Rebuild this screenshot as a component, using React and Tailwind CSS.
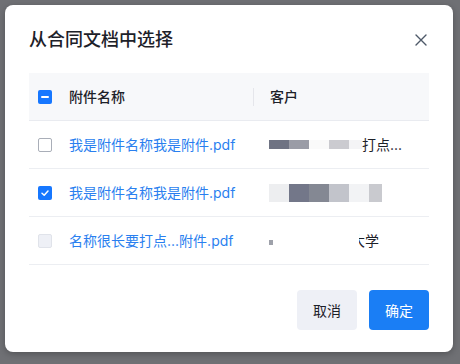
import React from "react";

const rows = [
  { name: "我是附件名称我是附件.pdf", state: "off" },
  { name: "我是附件名称我是附件.pdf", state: "on" },
  { name: "名称很长要打点...附件.pdf", state: "disabled" },
];

function Checkbox({ state }) {
  if (state === "on") {
    return (
      <div className="w-[14px] h-[14px] rounded-[2px] bg-[#1677ff] flex items-center justify-center">
        <svg width="10" height="10" viewBox="0 0 10 10" fill="none">
          <path d="M2 5.2 4.2 7.2 8 3" stroke="#fff" strokeWidth="1.5" strokeLinecap="round" strokeLinejoin="round" />
        </svg>
      </div>
    );
  }
  if (state === "some") {
    return (
      <div className="w-[14px] h-[14px] rounded-[2px] bg-[#1677ff] flex items-center justify-center">
        <div className="w-[8px] h-[2px] bg-white rounded-full" />
      </div>
    );
  }
  if (state === "disabled") {
    return <div className="w-[14px] h-[14px] rounded-[2px] bg-[#eef0f6] border border-[#e0e3ea]" />;
  }
  return <div className="w-[14px] h-[14px] rounded-[2px] bg-white border border-[#a9aeb8]" />;
}

function Customer({ i }) {
  if (i === 0) {
    return (
      <div className="flex items-center">
        <div className="flex">
          <div className="w-[20px] h-[9px] bg-[#6f7383]" />
          <div className="w-[20px] h-[9px] bg-[#9a9ca6]" />
          <div className="w-[20px] h-[9px] bg-[#fafafa]" />
          <div className="w-[20px] h-[9px] bg-[#cbcbd0]" />
          <div className="w-[13px] h-[9px] bg-[#f4f4f6]" />
        </div>
        <span className="text-[14px] text-[#1d2129]">打点...</span>
      </div>
    );
  }
  if (i === 1) {
    return (
      <div className="flex">
        <div className="w-[20px] h-[18px] bg-[#edeef0]" />
        <div className="w-[20px] h-[18px] bg-[#737789]" />
        <div className="w-[20px] h-[18px] bg-[#848893]" />
        <div className="w-[20px] h-[18px] bg-[#c2c4cb]" />
        <div className="w-[20px] h-[18px] bg-[#f2f3f5]" />
        <div className="w-[13px] h-[18px] bg-[#c9cacf]" />
      </div>
    );
  }
  return (
    <div className="flex items-center">
      <div className="w-[4px] h-[5px] bg-[#9ea1aa] mt-[3px]" />
      <span className="relative ml-[78px] text-[14px] text-[#1d2129]">
        大学
        <span className="absolute left-0 top-0 w-[8px] h-full bg-white" />
      </span>
    </div>
  );
}

export default function App() {
  return (
    <div className="w-[460px] h-[364px] bg-[#6f7074] p-[5px] font-['Inter','Noto_Sans_CJK_SC',sans-serif]">
      <div className="w-[448px] h-[347px] bg-white rounded-[8px] shadow-[0_2px_6px_rgba(0,0,0,0.25)] px-6 pt-[22px]">
        <div className="flex items-center justify-between h-[26px]">
          <h2 className="text-[18px] leading-[26px] font-medium text-[#1d2129]">从合同文档中选择</h2>
          <svg width="12" height="12" viewBox="0 0 12 12" fill="none" className="mr-[2px]">
            <path d="M1 1 11 11M11 1 1 11" stroke="#4e5969" strokeWidth="1.4" strokeLinecap="round" />
          </svg>
        </div>

        <div className="mt-5 text-[14px]">
          <div className="grid grid-cols-[24px_200px_1fr] h-[48px] items-center bg-[#f7f8fa] border-b border-[#e9ebf0]">
            <div className="pl-[9px]">
              <Checkbox state="some" />
            </div>
            <div className="pl-4 text-[#1d2129] font-medium">附件名称</div>
            <div className="flex items-center">
              <div className="w-px h-[18px] bg-[#e5e6eb]" />
              <span className="pl-4 text-[#1d2129] font-medium">客户</span>
            </div>
          </div>
          {rows.map((r, i) => (
            <div key={i} className="grid grid-cols-[24px_200px_1fr] h-[48px] items-center border-b border-[#eceef2]">
              <div className="pl-[9px]">
                <Checkbox state={r.state} />
              </div>
              <div className="pl-4 text-[#2a7fef] whitespace-nowrap">{r.name}</div>
              <div className="pl-4">
                <Customer i={i} />
              </div>
            </div>
          ))}
        </div>

        <div className="flex justify-end gap-3 mt-[25px]">
          <button className="w-[60px] h-10 rounded-[4px] bg-[#eef0f6] text-[14px] text-[#1d2129]">取消</button>
          <button className="w-[60px] h-10 rounded-[4px] bg-[#1a7ef5] text-[14px] text-white">确定</button>
        </div>
      </div>
    </div>
  );
}
